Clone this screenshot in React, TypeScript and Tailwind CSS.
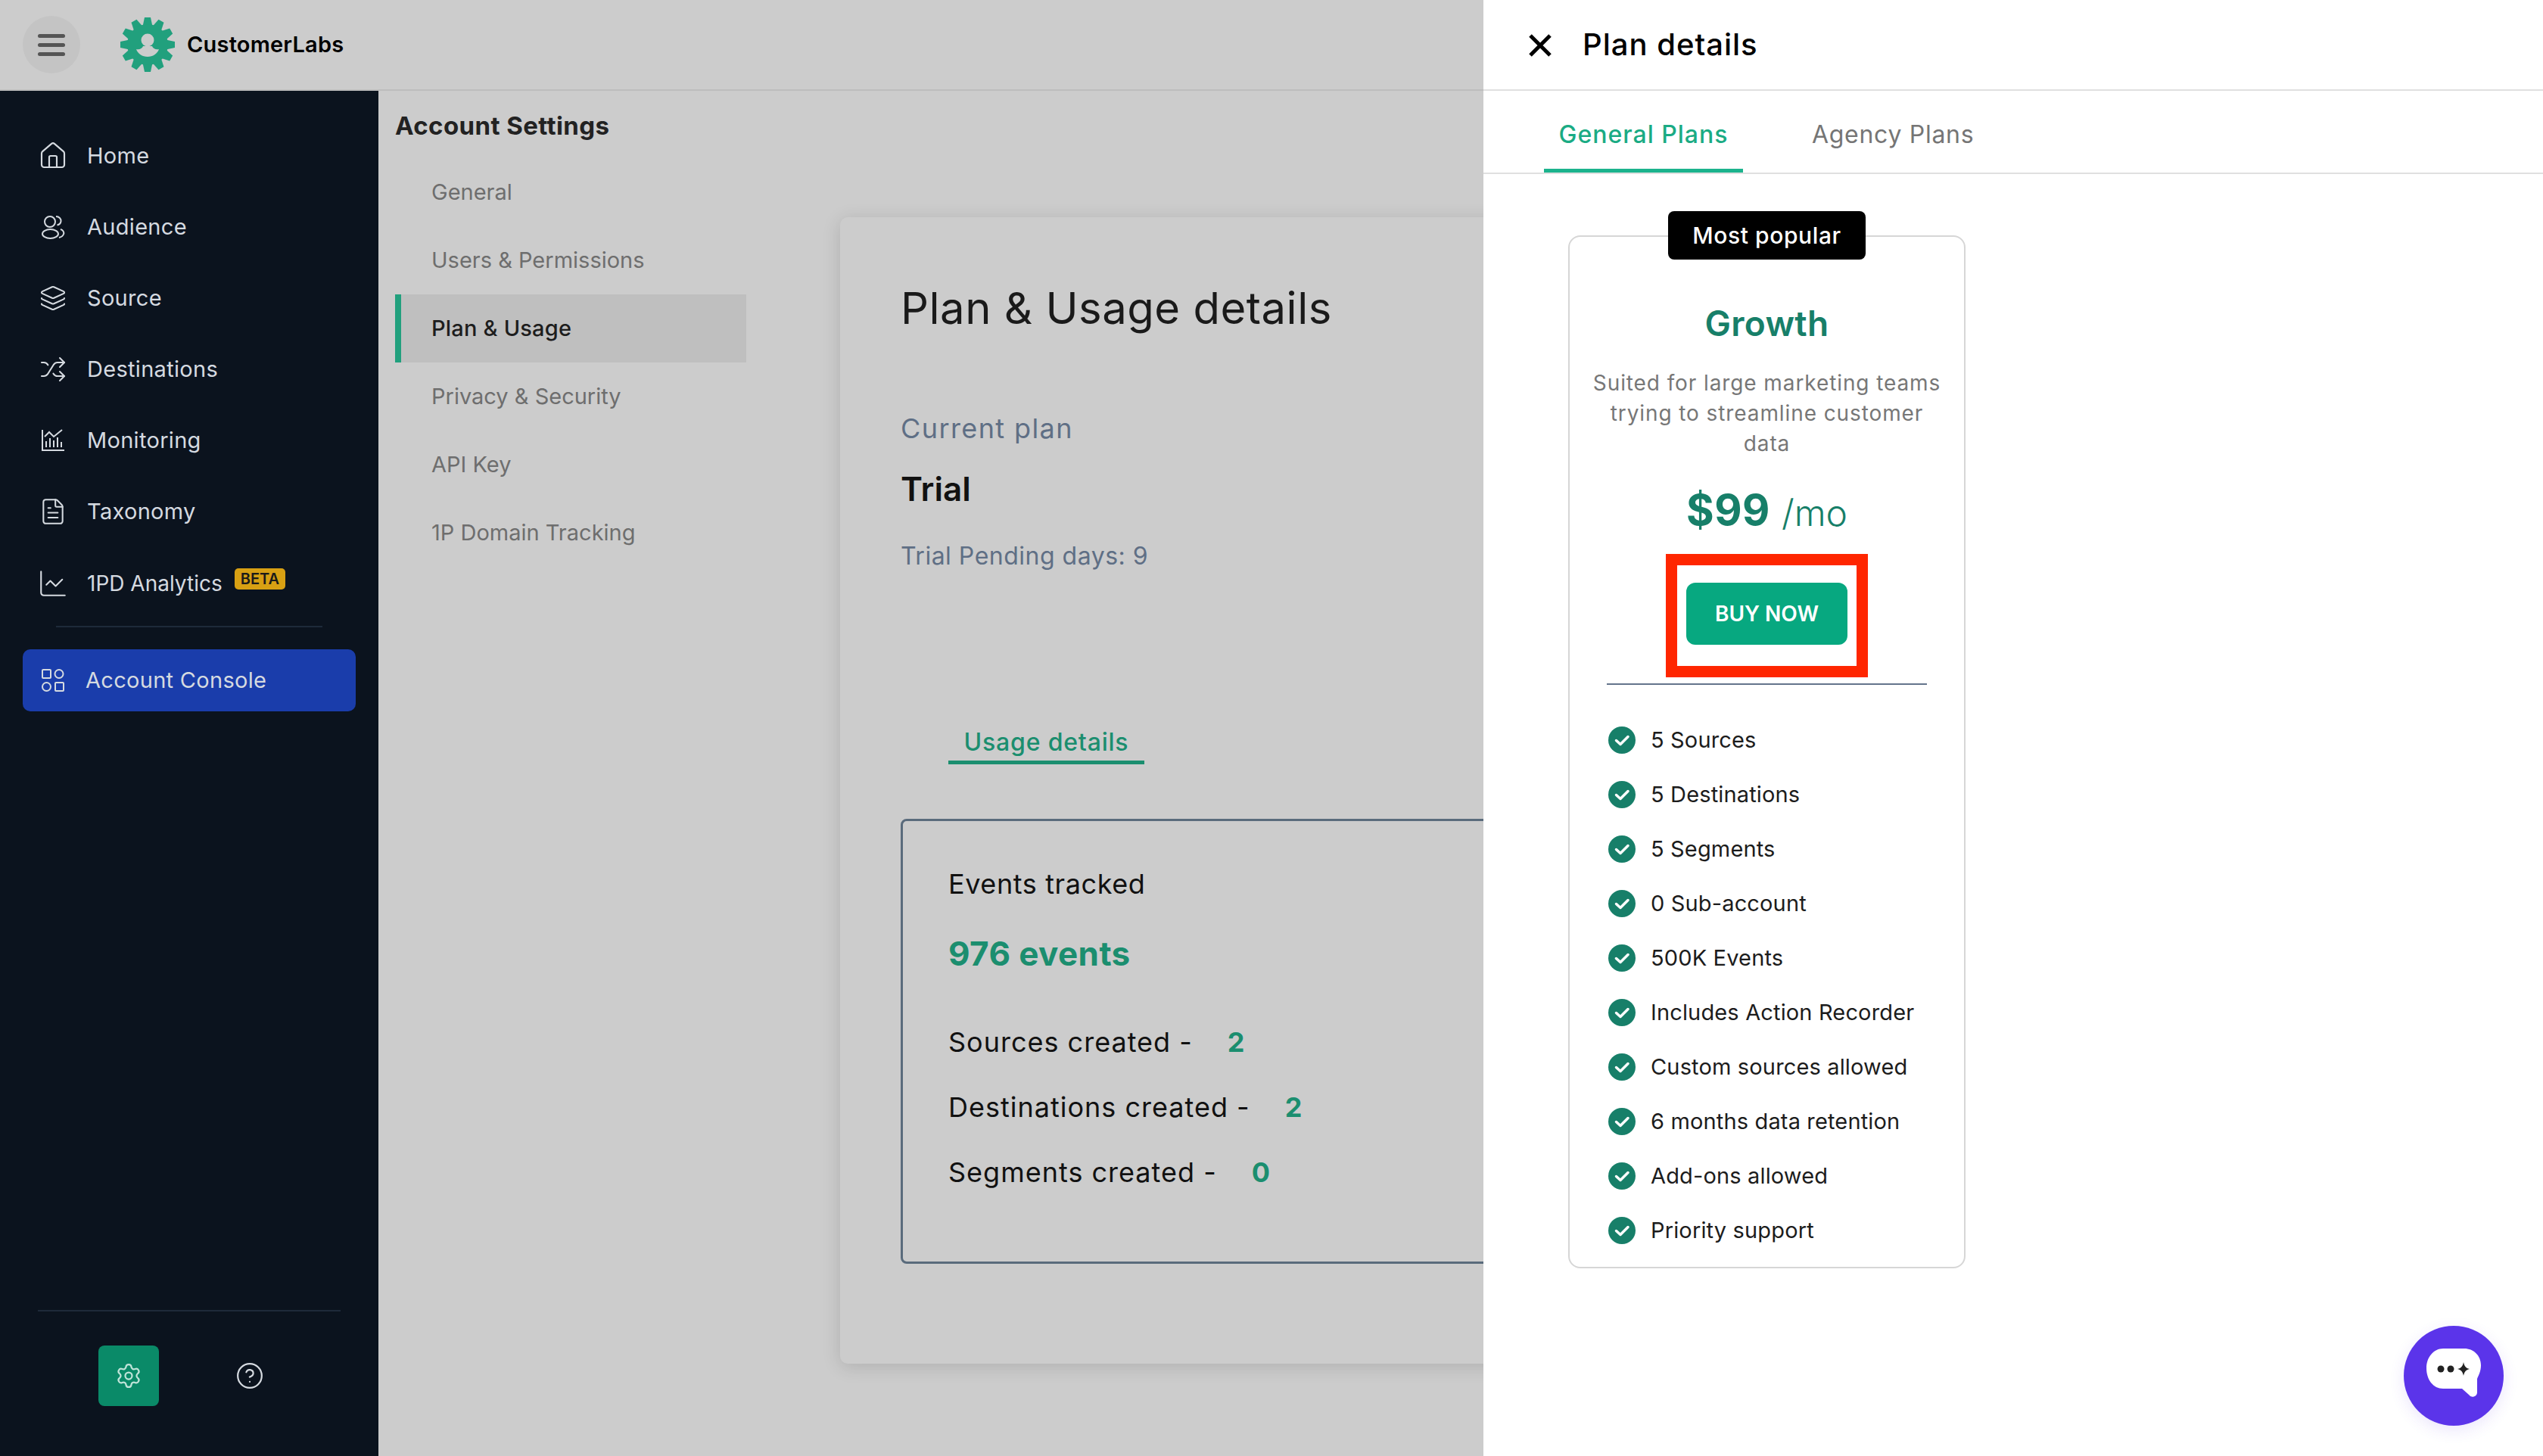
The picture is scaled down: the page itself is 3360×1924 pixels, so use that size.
import React from 'react';
import { House, Layers, Shuffle, FileText, ChartLine, Settings, CircleHelp } from 'lucide-react';

const AudienceIcon = () => (
  <svg width="32" height="34" viewBox="0 0 32 34" fill="none" stroke="#d5dae0" strokeWidth="2">
    <circle cx="12" cy="10" r="7" />
    <ellipse cx="12.500" cy="26" rx="10.500" ry="6" />
    <path d="M20 3c4 0 7 3 6.500 6.500s-3 4.500-5 5M26 20c3.500 1 5 4 4 6.500s-4 4-6 4.500" />
  </svg>
);

const MonitoringIcon = () => (
  <svg width="32" height="32" viewBox="0 0 32 32" fill="none" stroke="#d5dae0" strokeWidth="2">
    <path d="M2 2v27h29M7 25v-8M12 25V13M17 25v-9M22 25V12M27 25v-7M5 11l6-6 6 6 11-9" />
  </svg>
);

const ConsoleIcon = () => (
  <svg width="32" height="32" viewBox="0 0 32 32" fill="none" stroke="#d5dae0" strokeWidth="2">
    <rect x="2" y="2" width="11" height="11" rx="1" />
    <circle cx="24" cy="7.500" r="5.500" />
    <circle cx="7.500" cy="24.500" r="5.500" />
    <rect x="19" y="19" width="11" height="11" rx="1" />
  </svg>
);

const Logo = () => {
  const teeth = Array.from({ length: 12 }, (_, i) => i * 30);
  return (
    <svg width="72" height="72" viewBox="0 0 72 72">
      {teeth.map((angle) => (
        <path key={angle} d="M32 0h8l2.500 12h-13Z" fill="#21a07d" transform={`rotate(${angle} 36 36)`} />
      ))}
      <circle cx="36" cy="36" r="27" fill="#21a07d" />
      <circle cx="36" cy="30" r="8.500" fill="#cccccc" />
      <path d="M21 42c4 1 8-1 9-4h12c1 3 5 5 9 4-2 6-8 10-15 10s-13-4-15-10Z" fill="#cccccc" />
    </svg>
  );
};

const CheckIcon = () => (
  <svg width="36" height="36" viewBox="0 0 36 36" className="shrink-0">
    <circle cx="18" cy="18" r="18" fill="#177f69" />
    <path d="M10.500 18.500l5.500 5 10-10" fill="none" stroke="#fff" strokeWidth="3.500" strokeLinecap="round" strokeLinejoin="round" />
  </svg>
);

const mainNav = [
  { label: 'Home', icon: <House size={40} strokeWidth={1.3} color="#d5dae0" className="shrink-0" /> },
  { label: 'Audience', icon: <AudienceIcon /> },
  { label: 'Source', icon: <Layers size={36} strokeWidth={1.4} color="#d5dae0" className="shrink-0" /> },
  { label: 'Destinations', icon: <Shuffle size={36} strokeWidth={1.4} color="#d5dae0" className="shrink-0" /> },
  { label: 'Monitoring', icon: <MonitoringIcon /> },
  { label: 'Taxonomy', icon: <FileText size={38} strokeWidth={1.3} color="#d5dae0" className="shrink-0" /> },
];

const settingsNav = ['General', 'Users & Permissions', 'Plan & Usage', 'Privacy & Security', 'API Key', '1P Domain Tracking'];

const features = [
  '5 Sources',
  '5 Destinations',
  '5 Segments',
  '0 Sub-account',
  '500K Events',
  'Includes Action Recorder',
  'Custom sources allowed',
  '6 months data retention',
  'Add-ons allowed',
  'Priority support',
];

const counts = [
  { label: 'Sources created -', value: '2' },
  { label: 'Destinations created -', value: '2' },
  { label: 'Segments created -', value: '0' },
];

export default function App() {
  return (
    <div className="relative flex h-[1924px] w-[3360px] overflow-hidden bg-white font-['Inter',sans-serif]">
      {/* dimmed page behind the drawer */}
      <div className="flex h-full w-[1960px] shrink-0 flex-col overflow-hidden bg-[#cccccc]">
        <header className="flex h-[120px] shrink-0 items-center border-b-2 border-[#bdbdbd] pl-[30px]">
          <div className="flex h-[76px] w-[76px] items-center justify-center rounded-full bg-[#c4c4c4]">
            <div className="flex w-[36px] flex-col gap-[7px]">
              <span className="h-[5px] rounded-full bg-[#555555]" />
              <span className="h-[5px] rounded-full bg-[#555555]" />
              <span className="h-[5px] rounded-full bg-[#555555]" />
            </div>
          </div>
          <div className="ml-[53px]">
            <Logo />
          </div>
          <span className="ml-[16px] text-[29px] font-semibold tracking-[0.2px] text-black">CustomerLabs</span>
        </header>

        <div className="flex min-h-0 flex-1">
          <aside className="flex w-[500px] shrink-0 flex-col bg-[#0b131e] pt-[39px] pb-[66px]">
            {mainNav.map((item) => (
              <div key={item.label} className="flex h-[94px] items-center pl-[54px]">
                <span className="flex w-[32px] justify-center">{item.icon}</span>
                <span className="ml-[29px] text-[29px] tracking-[0.3px] text-[#d5dae0]">{item.label}</span>
              </div>
            ))}
            <div className="flex h-[94px] items-center pl-[54px] pt-[2px]">
              <span className="flex w-[32px] justify-center">
                <ChartLine size={42} strokeWidth={1.2} color="#d5dae0" className="shrink-0" />
              </span>
              <span className="ml-[29px] text-[28px] text-[#d5dae0]">1PD Analytics</span>
              <span className="mb-[12px] ml-[16px] rounded-[5px] bg-[#d8a013] px-[8px] text-[20px] leading-[28px] font-semibold text-[#1a1a1a]">BETA</span>
            </div>
            <div className="mx-[74px] mt-[10px] h-[2px] bg-[#1e2a3a]" />
            <div className="mx-[30px] mt-[29px] flex h-[82px] items-center rounded-[10px] bg-[#1a3dab] pl-[24px]">
              <ConsoleIcon />
              <span className="ml-[27px] text-[29px] tracking-[0.3px] text-[#d5dae0]">Account Console</span>
            </div>
            <div className="mx-[50px] mt-auto h-[2px] bg-[#1e2a3a]" />
            <div className="mt-[45px] flex items-center pl-[130px]">
              <div className="flex h-[80px] w-[80px] items-center justify-center rounded-[8px] bg-[#0a8a68]">
                <Settings size={36} strokeWidth={1.5} color="#bfe3d8" />
              </div>
              <span className="ml-[101px]">
                <CircleHelp size={38} strokeWidth={1.4} color="#d5dae0" />
              </span>
            </div>
          </aside>

          <nav className="w-[486px] shrink-0 pt-[26px] pl-[22px]">
            <h2 className="text-[33px] leading-[40px] font-bold tracking-[0.4px] text-[#222222]">Account Settings</h2>
            <ul className="mt-[23px]">
              {settingsNav.map((item) =>
                item === 'Plan & Usage' ? (
                  <li key={item} className="flex h-[90px] items-center border-l-[8px] border-[#21a07d] bg-[#bfbfbf] pl-[40px] text-[29px] font-medium tracking-[0.2px] text-[#1d1d1d]">
                    {item}
                  </li>
                ) : (
                  <li key={item} className="flex h-[90px] items-center pl-[48px] text-[29px] text-[#6e6e6e]">
                    {item}
                  </li>
                ),
              )}
            </ul>
          </nav>

          <main className="ml-[124px] mt-[167px] h-[1515px] w-[1400px] shrink-0 rounded-[10px] bg-[#cccccc] pt-[88px] pl-[80px] shadow-[0_4px_24px_rgba(0,0,0,0.14)]">
            <h1 className="text-[58px] leading-[64px] tracking-[0.5px] text-[#1a1a1a]">Plan &amp; Usage details</h1>
            <p className="mt-[107px] text-[36px] leading-[40px] tracking-[1.4px] text-[#5f6f85]">Current plan</p>
            <p className="mt-[35px] text-[44px] leading-[50px] font-semibold text-[#111111]">Trial</p>
            <p className="mt-[44px] text-[32px] leading-[40px] tracking-[0.5px] text-[#5f6f85]">Trial Pending days: 9</p>
            <div className="mt-[206px] ml-[63px] w-[259px] border-b-[5px] border-[#1b8e6f] pb-[4px] text-center text-[32px] leading-[40px] font-medium tracking-[0.8px] text-[#1b8e6f]">
              Usage details
            </div>
            <section className="mt-[72px] h-[588px] rounded-[8px] border-[3px] border-[#5a6b7c] pt-[63px] pl-[60px]">
              <p className="text-[36px] leading-[40px] tracking-[0.6px] text-[#111111]">Events tracked</p>
              <p className="mt-[47px] text-[44px] leading-[50px] font-bold tracking-[0.4px] text-[#1b8e6f]">976 events</p>
              <div className="mt-[72px] flex flex-col gap-[46px]">
                {counts.map((row) => (
                  <div key={row.label} className="flex text-[36px] leading-[40px] tracking-[1px] text-[#111111]">
                    <span>{row.label}</span>
                    <span className="ml-[46px] font-bold text-[#1b8e6f]">{row.value}</span>
                  </div>
                ))}
              </div>
            </section>
          </main>
        </div>
      </div>

      {/* plan details drawer */}
      <div className="flex h-full w-[1400px] shrink-0 flex-col bg-white">
        <div className="flex h-[120px] shrink-0 items-center border-b-2 border-[#e0e0e0] pl-[60px]">
          <svg width="30" height="30" viewBox="0 0 30 30" stroke="#000" strokeWidth="5" className="mt-[2px]">
            <path d="M2 2l26 26M28 2L2 28" />
          </svg>
          <span className="ml-[41px] text-[40px] font-medium tracking-[1px] text-black">Plan details</span>
        </div>
        <div className="flex h-[110px] shrink-0 border-b-2 border-[#e0e0e0] pl-[80px]">
          <div className="h-[108px] w-[263px] border-b-[5px] border-[#1cb38d] pt-[38px] text-center text-[32px] leading-[40px] font-medium tracking-[1px] text-[#1aab84]">
            General Plans
          </div>
          <div className="ml-[91px] pt-[38px] text-[32px] leading-[40px] tracking-[0.7px] text-[#757575]">Agency Plans</div>
        </div>

        <div className="relative mt-[81px] ml-[112px] h-[1365px] w-[525px] rounded-[16px] border-2 border-[#d6d6d6] pt-[86px]">
          <div className="absolute -top-[34px] left-[130px] flex h-[64px] w-[261px] items-center justify-center rounded-[8px] bg-black text-[30px] font-medium tracking-[0.6px] text-white">
            Most popular
          </div>
          <p className="text-center text-[46px] leading-[56px] font-semibold tracking-[0.3px] text-[#177f69]">Growth</p>
          <p className="mt-[31px] text-center text-[28px] leading-[40px] tracking-[0.9px] text-[#777777]">
            Suited for large marketing teams
            <br />
            trying to streamline customer
            <br />
            data
          </p>
          <div className="mt-[33px] flex h-[70px] items-center justify-center text-[#177f69]">
            <span className="text-[56px] font-bold tracking-[0.5px]">$99</span>
            <span className="mt-[8px] ml-[15px] text-[48px] font-light">/mo</span>
          </div>
          <div className="mx-auto mt-[23px] flex h-[163px] w-[267px] justify-center border-[15px] border-[#ff2600] pt-[23px]">
            <div className="flex h-[82px] w-[213px] items-center justify-center rounded-[12px] bg-[#07a880] text-[28px] font-semibold text-white">
              BUY NOW
            </div>
          </div>
          <div className="mt-[8px] ml-[49px] h-[2px] w-[423px] bg-[#64748b]" />
          <ul className="mt-[37px] pl-[51px]">
            {features.map((item) => (
              <li key={item} className="flex h-[72px] items-center gap-[20px] text-[29px] tracking-[0.15px] text-[#1c1c1c]">
                <CheckIcon />
                {item}
              </li>
            ))}
          </ul>
        </div>
      </div>

      <div className="absolute right-[52px] bottom-[40px] h-[132px] w-[132px] rounded-full bg-[#5b34ea] shadow-[0_6px_20px_rgba(91,52,234,0.12)]">
        <svg width="132" height="132" viewBox="0 0 132 132">
          <path d="M52 30h28c12 0 22 9 22 22 0 8-3 13-5 18v18a6 6 0 0 1-11 3l-9-8H52C39 83 30 71 30 56s10-26 22-26Z" fill="#fff" />
          <circle cx="49" cy="57" r="4.500" fill="#222" />
          <circle cx="62" cy="57" r="4.500" fill="#222" />
          <path d="M79 48c1 5 3 8 8 9-5 1-7 4-8 9-1-5-3-8-8-9 5-1 7-4 8-9Z" fill="#222" />
        </svg>
      </div>
    </div>
  );
}
